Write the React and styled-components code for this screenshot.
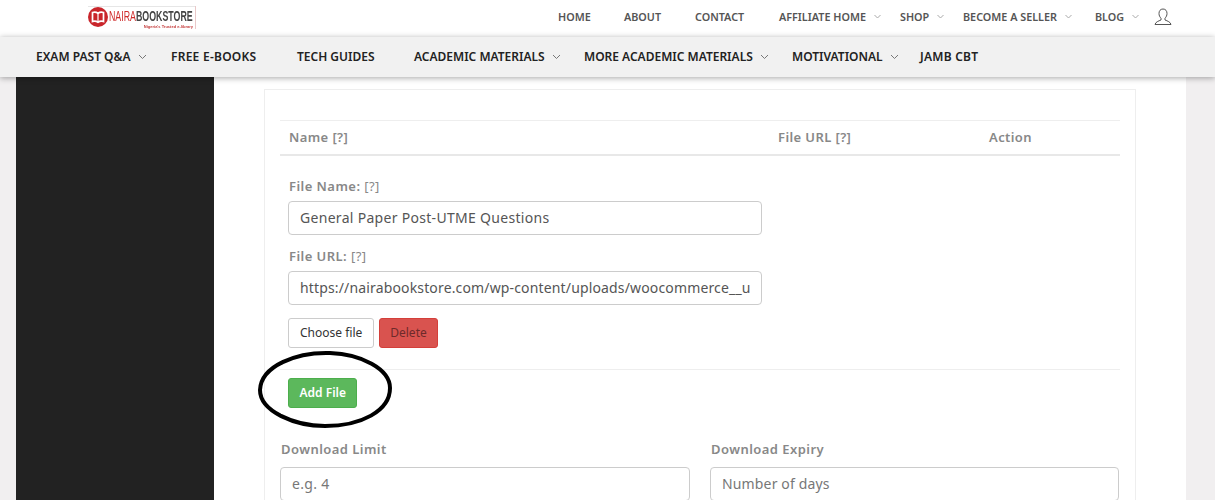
import React from "react";
import styled, { createGlobalStyle } from "styled-components";

const GlobalStyle = createGlobalStyle`
  html, body {
    margin: 0;
    padding: 0;
    height: 500px;
    overflow: hidden;
    background: #f1eff0;
  }
  * { box-sizing: border-box; }
  #root { height: 500px; overflow: hidden; }
`;

const TopBar = styled.header`
  display: flex;
  align-items: center;
  height: 37px;
  padding-left: 88px;
  background: #fff;
`;

const Logo = styled.div`
  display: flex;
  align-items: center;
  position: relative;
  width: 108px;
  height: 23px;
  margin-top: -3px;
  border-right: 1px solid #e9c9c9;
  box-shadow: inset 0 1px 0 #e6e6e6;
  filter: blur(0.3px);
`;

const LogoName = styled.span`
  display: block;
  flex: none;
  margin-left: 1px;
  margin-top: -3px;
  font: 700 14px/14px "Liberation Sans", Arial, sans-serif;
  color: #444;
  white-space: nowrap;
  transform: scaleX(0.63);
  transform-origin: left center;
  span { color: #cf2a2a; font-weight: 400; }
`;

const LogoTag = styled.span`
  position: absolute;
  right: 2px;
  bottom: 0;
  font: 700 4px/5px "Liberation Sans", Arial, sans-serif;
  color: #c43b3b;
  white-space: nowrap;
`;

const TopMenu = styled.nav`
  display: flex;
  align-items: center;
  margin-left: auto;
  padding-right: 43px;
  margin-top: -4px;
`;

const TopItem = styled.a`
  display: flex;
  align-items: center;
  width: ${(p) => p.$w}px;
  font: 600 10.8px/14px "Noto Sans", sans-serif;
  color: #555;
  white-space: nowrap;
`;

const MainNav = styled.nav`
  position: relative;
  z-index: 2;
  display: flex;
  align-items: center;
  height: 40px;
  padding-left: 36px;
  background: #f1f1f1;
  box-shadow: 0 1px 6px rgba(0, 0, 0, 0.35);
`;

const NavItem = styled.a`
  display: flex;
  align-items: center;
  width: ${(p) => p.$w}px;
  font: 600 12px/16px "Noto Sans", sans-serif;
  letter-spacing: ${(p) => p.$spacing || 0}px;
  color: #222;
  white-space: nowrap;
`;

const Chevron = styled.svg`
  flex: none;
  width: 9px;
  height: 6px;
  margin-left: 7px;
  fill: none;
  stroke: ${(p) => p.$color || "#777"};
  stroke-width: 1;
`;

const Body = styled.div`
  display: flex;
  height: 423px;
  padding: 0 29px 0 16px;
`;

const Sidebar = styled.aside`
  flex: none;
  width: 198px;
  background: #222;
`;

const Content = styled.main`
  position: relative;
  flex: 1;
  padding: 0 50px;
  background: #fff;
  overflow: hidden;
`;

const Panel = styled.section`
  height: 100%;
  padding: 0 15px;
  border: solid #eee;
  border-width: 0 1px;
`;

const PanelRule = styled.div`
  height: 1px;
  margin: 12px -15px 30px;
  background: #eee;
`;

const TableHead = styled.div`
  display: grid;
  grid-template-columns: 489px 211px 1fr;
  align-items: center;
  height: 36px;
  padding: 0 0 2px 9px;
  border-top: 1px solid #eee;
  border-bottom: 2px solid #e8e8e8;
  font: 600 13px/16px "Noto Sans", sans-serif;
  letter-spacing: 0.4px;
  color: #888;
`;

const FileRow = styled.div`
  display: flex;
  flex-direction: column;
  align-items: flex-start;
  padding: 22px 0 0 8px;
`;

const Label = styled.label`
  display: block;
  padding-left: 1px;
  font: 600 13px/16px "Noto Sans", sans-serif;
  letter-spacing: 0.45px;
  color: #888;
  span { font-weight: 400; }
`;

const Input = styled.input`
  display: block;
  width: ${(p) => p.$w || "474px"};
  height: 34px;
  margin: ${(p) => p.$top || 7}px 0 13px;
  padding: 0 11px 2px;
  border: 1px solid #ccc;
  border-radius: 4px;
  background: #fff;
  font: 400 14px/20px "Noto Sans", sans-serif;
  letter-spacing: ${(p) => p.$spacing || 0.3}px;
  color: #555;
  &::placeholder { color: #777; opacity: 1; }
`;

const Actions = styled.div`
  display: flex;
  gap: 5px;
`;

const Button = styled.button`
  height: 30px;
  padding: 0 ${(p) => p.$pad || 10}px;
  border: 1px solid ${(p) => p.$border};
  border-radius: 3px;
  background: ${(p) => p.$bg};
  font: ${(p) => p.$weight || 400} 12px/16px "Noto Sans", sans-serif;
  color: ${(p) => p.$color};
`;

const Rule = styled.div`
  height: 1px;
  margin-top: 21px;
  background: #eee;
`;

const AddRow = styled.div`
  padding: 8px 0 0 8px;
`;

const LimitRow = styled.div`
  display: grid;
  grid-template-columns: 410px 409px;
  column-gap: 20px;
  margin-top: 33px;
`;

const Marker = styled.svg`
  position: absolute;
  left: 42px;
  top: 272px;
  width: 138px;
  height: 82px;
  fill: none;
  stroke: #000;
  stroke-width: 4;
  pointer-events: none;
`;

const menuArrow = () => (
  <Chevron viewBox="0 0 9 6" $color="#aaa">
    <path d="M1.500 1l3 3 3-3" />
  </Chevron>
);

const arrow = () => (
  <Chevron viewBox="0 0 9 6">
    <path d="M1 1l3.500 3.500L8 1" />
  </Chevron>
);

export default function App() {
  return (
    <>
      <GlobalStyle />
      <TopBar>
        <Logo>
          <svg width="20" height="20" viewBox="0 0 20 20" style={{ flex: "none" }}>
            <circle cx="10" cy="10" r="10" fill="#c9252b" />
            <path d="M4.500 5.500c2-.6 4-.3 5.500.8 1.500-1.100 3.500-1.400 5.500-.8v9c-2-.6-4-.3-5.500.8-1.500-1.100-3.500-1.400-5.500-.8z" fill="none" stroke="#fff" strokeWidth="1.700" />
            <path d="M10 6v9" stroke="#fff" strokeWidth="1.200" />
          </svg>
          <LogoName><span>NAIRA</span>BOOKSTORE</LogoName>
          <LogoTag>Nigeria's Trusted e-library</LogoTag>
        </Logo>
        <TopMenu>
          <TopItem $w={66}>HOME</TopItem>
          <TopItem $w={71}>ABOUT</TopItem>
          <TopItem $w={84}>CONTACT</TopItem>
          <TopItem $w={121}>AFFILIATE HOME{menuArrow()}</TopItem>
          <TopItem $w={63}>SHOP{menuArrow()}</TopItem>
          <TopItem $w={132}>BECOME A SELLER{menuArrow()}</TopItem>
          <TopItem $w={59}>BLOG{menuArrow()}</TopItem>
          <svg width="18" height="18" viewBox="0 0 18 18" fill="none" stroke="#555" strokeWidth="1">
            <path d="M9 1c-2.700 0-4 2-4 4.500 0 2 .8 3.500 2 4.700v1.800c-2.500 1-5.500 2-6 4.500h16c-.5-2.500-3.500-3.500-6-4.500v-1.800c1.200-1.200 2-2.700 2-4.700C13 3 11.700 1 9 1z" />
          </svg>
        </TopMenu>
      </TopBar>

      <MainNav>
        <NavItem $w={135}>EXAM PAST Q&amp;A{arrow()}</NavItem>
        <NavItem $w={126} $spacing={0.25}>FREE E-BOOKS</NavItem>
        <NavItem $w={117}>TECH GUIDES</NavItem>
        <NavItem $w={170}>ACADEMIC MATERIALS{arrow()}</NavItem>
        <NavItem $w={208}>MORE ACADEMIC MATERIALS{arrow()}</NavItem>
        <NavItem $w={128}>MOTIVATIONAL{arrow()}</NavItem>
        <NavItem $w={60} $spacing={0.25}>JAMB CBT</NavItem>
      </MainNav>

      <Body>
        <Sidebar />
        <Content>
          <Panel>
            <PanelRule />
            <TableHead>
              <span>Name [?]</span>
              <span>File URL [?]</span>
              <span>Action</span>
            </TableHead>
            <FileRow>
              <Label>File Name: <span>[?]</span></Label>
              <Input defaultValue="General Paper Post-UTME Questions" readOnly />
              <Label>File URL: <span>[?]</span></Label>
              <Input $spacing={0.15} defaultValue="https://nairabookstore.com/wp-content/uploads/woocommerce__uploads/2019/general-paper.pdf" readOnly />
              <Actions>
                <Button $pad={11} $bg="#fff" $border="#ccc" $color="#333">Choose file</Button>
                <Button $bg="#d9534f" $border="#d43f3a" $color="#6e2a2a">Delete</Button>
              </Actions>
            </FileRow>
            <Rule />
            <AddRow>
              <Button $pad={10.5} $bg="#5cb85c" $border="#4cae4c" $color="#fff" $weight={600}>Add File</Button>
            </AddRow>
            <LimitRow>
              <div>
                <Label>Download Limit</Label>
                <Input $w="100%" $top={10} placeholder="e.g. 4" />
              </div>
              <div>
                <Label>Download Expiry</Label>
                <Input $w="100%" $top={10} $spacing={0.15} placeholder="Number of days" />
              </div>
            </LimitRow>
          </Panel>
          <Marker viewBox="0 0 138 82">
            <path d="M74 4C40 3 5 17 4 41C4 62 38 77 69 77C105 77 134 62 134 39C134 20 105 5 74 4Z" />
          </Marker>
        </Content>
      </Body>
    </>
  );
}
